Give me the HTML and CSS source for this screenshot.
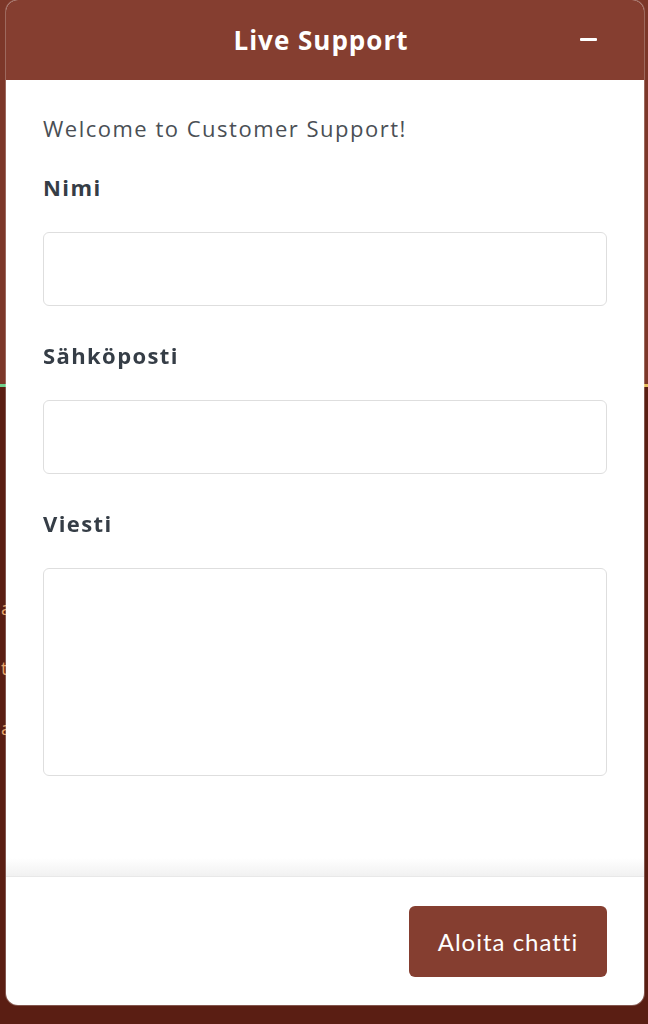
FILE: index.html
```html
<!DOCTYPE html>
<html lang="en">
<head>
    <meta charset="UTF-8">
    <meta name="viewport" content="width=device-width, initial-scale=1.0">
    <title>Live Support</title>
    <link rel="stylesheet" href="styles.css">
</head>
<body>
<div class="page">
    <div class="hero"></div>
    <div class="hero-line"></div>
    <div class="page-main">
        <p class="bg-text">a</p>
        <p class="bg-text">t</p>
        <p class="bg-text">a</p>
    </div>
</div>

<div class="chat-widget">
    <div class="chat-header">
        <span class="chat-title">Live Support</span>
        <button class="minimize-btn" aria-label="Minimize"><span></span></button>
    </div>
    <form class="chat-body" action="">
        <p class="welcome">Welcome to Customer Support!</p>
        <label class="field-label" for="name">Nimi</label>
        <input type="text" id="name" class="field-input">
        <label class="field-label" for="email">Sähköposti</label>
        <input type="email" id="email" class="field-input">
        <label class="field-label" for="message">Viesti</label>
        <textarea id="message" class="field-input field-textarea"></textarea>
    </form>
    <div class="chat-footer">
        <button class="start-btn">Aloita chatti</button>
    </div>
</div>
</body>
</html>
```

FILE: styles.css
```css
body {
    margin: 0;
    background-color: #5a1e13;
    font-family: "Open Sans", Arial, sans-serif;
    height: 1024px;
    overflow: hidden;
}
.hero {
    height: 384px;
    background-color: #7c3729;
}
.hero-line {
    height: 3px;
    background: linear-gradient(to right, #6fd08c, #e8c060);
}
.page-main {
    padding-top: 208px;
    display: flex;
    flex-direction: column;
    gap: 34px;
}
.bg-text {
    margin: 0;
    padding-left: 1px;
    color: #e7a56a;
    font-size: 18px;
    line-height: 26px;
}

/* floating chat widget */
.chat-widget {
    position: fixed;
    left: 6px;
    right: 4px;
    top: 0;
    bottom: 19px;
    background-color: #fff;
    border-radius: 12px;
    overflow: hidden;
    display: flex;
    flex-direction: column;
    box-shadow: 0 0 0 1px rgba(255,255,255,0.25);
}
.chat-header {
    height: 80px;
    background-color: #853e30;
    display: flex;
    align-items: center;
    justify-content: center;
    position: relative;
}
.chat-title {
    color: #fff;
    font-weight: 700;
    font-size: 26px;
    letter-spacing: 1px;
    margin-right: 8px;
}
.minimize-btn {
    position: absolute;
    right: 44px;
    top: 29px;
    width: 24px;
    height: 20px;
    background: none;
    border: none;
    padding: 0;
    cursor: pointer;
}
.minimize-btn span {
    display: block;
    width: 17px;
    height: 3px;
    margin: 0 auto;
    background-color: #fff;
    border-radius: 1px;
}
.chat-body {
    flex: 1;
    padding: 12px 37px 0 37px;
    display: flex;
    flex-direction: column;
    background: linear-gradient(to bottom, #fff calc(100% - 18px), #f1f1f1);
}
.welcome {
    margin: 21px 0 0 0;
    font-size: 22px;
    letter-spacing: 1.5px;
    line-height: 30px;
    color: #4a4f55;
}
.field-label {
    margin-top: 29px;
    font-size: 22px;
    font-weight: 700;
    letter-spacing: 1.4px;
    line-height: 30px;
    color: #353d46;
}
.field-input {
    margin-top: 30px;
    height: 74px;
    border: 1.5px solid #dedede;
    border-radius: 6px;
    box-sizing: border-box;
    font-family: inherit;
    font-size: 18px;
    padding: 10px 14px;
}
.field-input + .field-label {
    margin-top: 34px;
}
.field-textarea {
    height: 208px;
    resize: none;
}
.chat-footer {
    height: 128px;
    border-top: 1px solid #e8e8e8;
    display: flex;
    align-items: center;
    justify-content: flex-end;
    padding-right: 37px;
}
.start-btn {
    width: 198px;
    height: 71px;
    background-color: #853e30;
    color: #fff;
    border: none;
    border-radius: 6px;
    font-family: Lato, "Open Sans", sans-serif;
    font-size: 24px;
    letter-spacing: 1px;
    cursor: pointer;
}
```
